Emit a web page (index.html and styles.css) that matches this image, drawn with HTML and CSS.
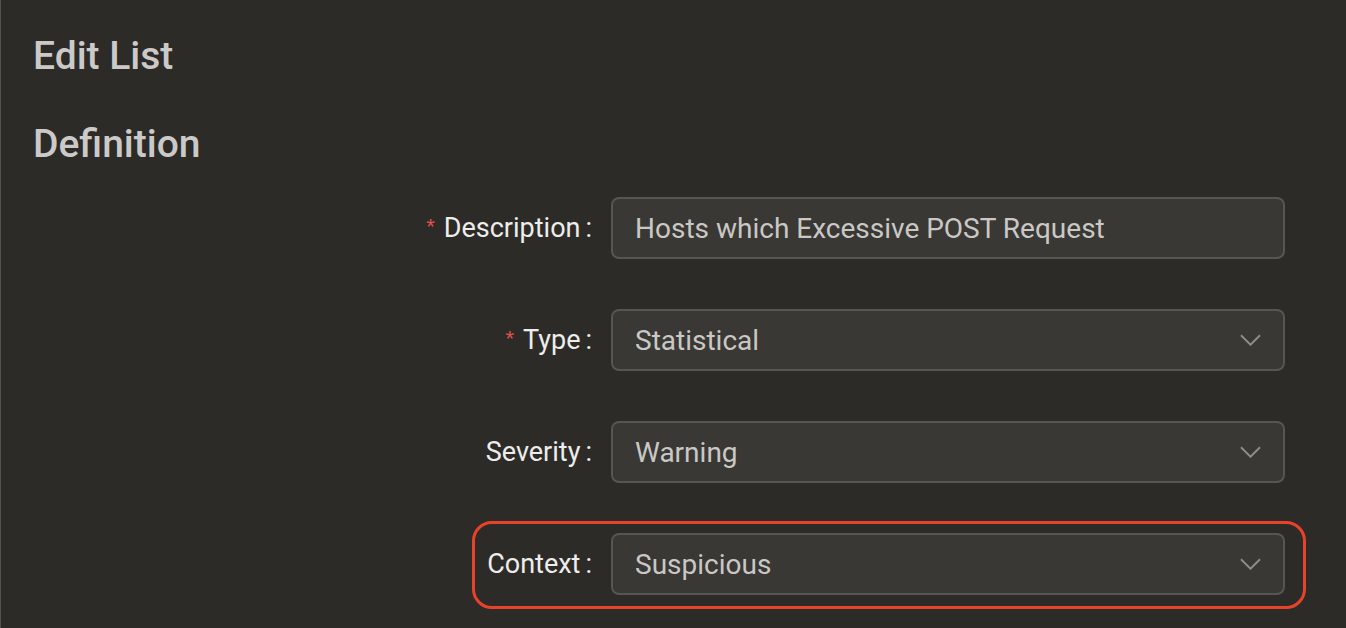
FILE: index.html
```html
<!DOCTYPE html>
<html lang="en">
<head>
<meta charset="utf-8">
<title>Edit List</title>
<link rel="stylesheet" href="styles.css">
</head>
<body>
<div class="page">
  <h1 class="title">Edit List</h1>
  <h2 class="section">Definition</h2>
  <form class="form">
    <label class="label"><span class="req">*</span>Description<span class="colon">:</span></label>
    <div class="control input">Hosts which Excessive POST Request</div>

    <label class="label"><span class="req">*</span>Type<span class="colon">:</span></label>
    <div class="control select"><span>Statistical</span><svg class="chev" viewBox="0 0 22 12"><path d="M1 1 L11 11 L21 1"/></svg></div>

    <label class="label">Severity<span class="colon">:</span></label>
    <div class="control select"><span>Warning</span><svg class="chev" viewBox="0 0 22 12"><path d="M1 1 L11 11 L21 1"/></svg></div>

    <label class="label">Context<span class="colon">:</span></label>
    <div class="control select"><span>Suspicious</span><svg class="chev" viewBox="0 0 22 12"><path d="M1 1 L11 11 L21 1"/></svg></div>
  </form>
  <div class="highlight"></div>
</div>
</body>
</html>
```
FILE: styles.css
```css
html, body {
  margin: 0;
  padding: 0;
  background: #2d2b28;
  height: 100%;
}
body {
  font-family: Roboto, "Liberation Sans", sans-serif;
  overflow: hidden;
}
.page {
  position: relative;
  min-height: 628px;
  border-left: 1px solid #55534f;
  padding: 30px 61px 0 32px;
}
.title {
  margin: 0;
  font-size: 39px;
  font-weight: 500;
  line-height: 52px;
  color: #cbcac8;
}
.section {
  margin: 36px 0 0;
  font-size: 39px;
  font-weight: 500;
  line-height: 52px;
  color: #cbcac8;
}
.form {
  display: grid;
  grid-template-columns: 1fr 674px;
  column-gap: 18px;
  row-gap: 50px;
  margin-top: 27px;
}
.label {
  display: flex;
  align-items: center;
  justify-content: flex-end;
  font-size: 27px;
  color: #ededeb;
}
.req {
  color: #e0524a;
  font-family: "Liberation Sans", sans-serif;
  font-size: 22px;
  margin-right: 9px;
  position: relative;
  top: -1px;
}
.colon {
  margin-left: 5px;
  margin-right: 1px;
}
.control {
  box-sizing: border-box;
  height: 62px;
  border: 2px solid #585653;
  border-radius: 8px;
  background: #393835;
  display: flex;
  align-items: center;
  padding: 0 23px 0 22px;
  font-size: 28px;
  color: #c9c8c5;
}
.select {
  justify-content: space-between;
}
.chev {
  width: 21px;
  height: 12px;
  margin-right: -1px;
  fill: none;
  stroke: #8e8c88;
  stroke-width: 2;
}
.highlight {
  position: absolute;
  left: 471px;
  top: 521px;
  width: 834px;
  height: 88px;
  box-sizing: border-box;
  border: 3.5px solid #e8432a;
  border-radius: 20px;
  pointer-events: none;
}
```
